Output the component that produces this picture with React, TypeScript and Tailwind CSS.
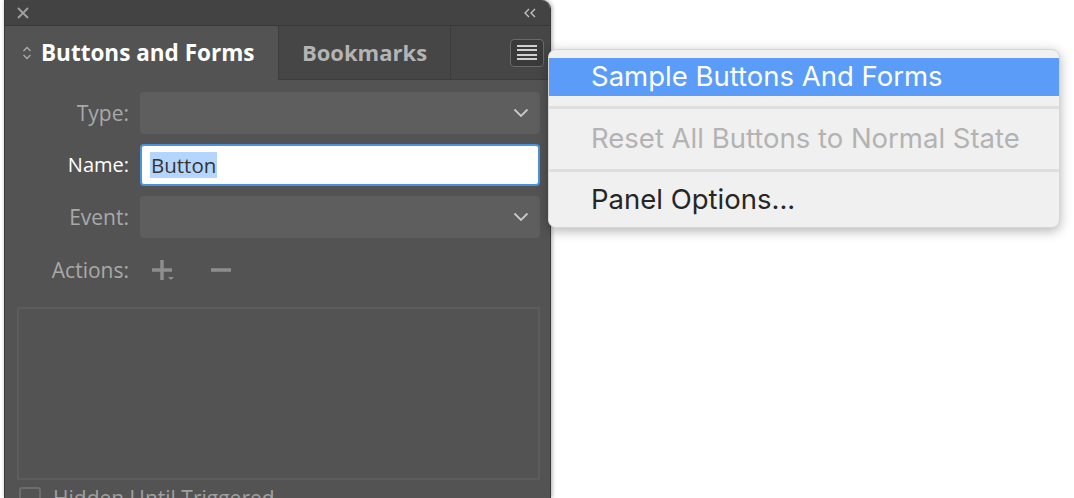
import React from "react";

const panelFont = { fontFamily: '"Open Sans", "Noto Sans", sans-serif' };
const menuFont = { fontFamily: 'Inter, "Liberation Sans", sans-serif' };

function Chevron() {
  return (
    <svg width="16" height="10" viewBox="0 0 16 10" fill="none">
      <path d="M1.5 1.5 L8 8 L14.5 1.5" stroke="#c9c9c9" strokeWidth="1.8" />
    </svg>
  );
}

function Dropdown() {
  return (
    <div className="flex h-[42px] flex-1 items-center justify-end rounded-[4px] bg-[#5e5e5e] pr-[11px]">
      <Chevron />
    </div>
  );
}

function Label({ children, active }: { children: React.ReactNode; active?: boolean }) {
  return (
    <div
      className={`w-[124px] shrink-0 text-right leading-none ${
        active ? "text-[20px] text-white" : "text-[21px] text-[#a9a9a9]"
      }`}
    >
      {children}
    </div>
  );
}

export default function App() {
  return (
    <div className="relative h-[498px] w-[1074px] overflow-hidden bg-white" style={panelFont}>
      {/* panel */}
      <div className="ml-[4px] flex h-full w-[547px] flex-col overflow-hidden rounded-tr-[9px] border-l border-r border-[#3a3a3a] shadow-[1px_0_4px_rgba(0,0,0,0.35)]">
        {/* title bar */}
        <div className="flex h-[25px] shrink-0 items-center justify-between bg-[#434343] pl-[11px] pr-[12px]">
          <svg width="14" height="14" viewBox="0 0 14 14">
            <path d="M2 2 L12 12 M12 2 L2 12" stroke="#a0a0a0" strokeWidth="1.8" />
          </svg>
          <svg width="16" height="12" viewBox="0 0 16 12" fill="none">
            <path d="M7 2 L3 6 L7 10 M13 2 L9 6 L13 10" stroke="#c0c0c0" strokeWidth="1.4" />
          </svg>
        </div>
        <div className="h-[1px] shrink-0 bg-[#383838]" />
        {/* tabs */}
        <div className="flex h-[54px] shrink-0">
          <div className="flex w-[274px] items-center gap-[9px] border-r border-[#3c3c3c] bg-[#535353] pl-[17px]">
            <svg width="10" height="16" viewBox="0 0 10 16" fill="none">
              <path d="M1.5 6 L5 2.5 L8.5 6 M1.5 10 L5 13.5 L8.5 10" stroke="#ababab" strokeWidth="1.3" />
            </svg>
            <span className="text-[22.5px] font-bold text-white">Buttons and Forms</span>
          </div>
          <div className="flex w-[172px] items-center justify-center border-b border-r border-[#3c3c3c] bg-[#464646]">
            <span className="text-[22px] font-bold text-[#b4b4b4]">Bookmarks</span>
          </div>
          <div className="flex flex-1 items-center justify-end border-b border-[#3c3c3c] bg-[#464646] pr-[6px]">
            <div className="flex h-[28px] w-[34px] flex-col items-center justify-center gap-[2.5px] rounded-[4px] border-[1.5px] border-[#6a6a6a] bg-[#3a3a3a]">
              <div className="h-[2px] w-[20px] bg-[#cfcfcf]" />
              <div className="h-[2px] w-[20px] bg-[#cfcfcf]" />
              <div className="h-[2px] w-[20px] bg-[#cfcfcf]" />
              <div className="h-[2px] w-[20px] bg-[#cfcfcf]" />
            </div>
          </div>
        </div>
        {/* body */}
        <div className="flex flex-1 flex-col bg-[#535353] pr-[10px] pt-[12px]">
          <div className="flex items-center gap-[11px]">
            <Label>Type:</Label>
            <Dropdown />
          </div>
          <div className="mt-[10px] flex items-center gap-[11px]">
            <Label active>Name:</Label>
            <div className="flex h-[42px] flex-1 items-center rounded-[4px] border-2 border-[#4b91dc] bg-white pl-[8px]">
              <span className="bg-[#b4d5fd] px-[1px] text-[20.5px] leading-[26px] text-[#363636]">Button</span>
            </div>
          </div>
          <div className="mt-[10px] flex items-center gap-[11px]">
            <Label>Event:</Label>
            <Dropdown />
          </div>
          <div className="mt-[12px] flex h-[40px] items-center gap-[11px]">
            <Label>Actions:</Label>
            <div className="flex items-center">
              <svg width="32" height="24" viewBox="0 0 32 24" className="ml-[11px]">
                <path d="M11 2 V22 M1 12 H21" stroke="#8e8e8e" strokeWidth="3.5" />
                <path d="M17 19 H23 L20 22 Z" fill="#8e8e8e" />
              </svg>
              <svg width="24" height="24" viewBox="0 0 24 24" className="ml-[26px]">
                <path d="M2 12 H22" stroke="#8e8e8e" strokeWidth="3.5" />
              </svg>
            </div>
          </div>
          <div className="ml-[12px] mt-[17px] h-[173px] border-2 border-[#5c5c5c]" />
          <div className="ml-[14px] mt-[7px] flex items-start gap-[12px]">
            <div className="h-[22px] w-[22px] rounded-[3px] border-2 border-[#6c6c6c]" />
            <span className="text-[21px] leading-[22px] text-[#9f9f9f]">Hidden Until Triggered</span>
          </div>
        </div>
      </div>

      {/* popup menu */}
      <div
        className="absolute left-[548px] top-[49px] w-[512px] overflow-hidden rounded-[8px] border border-[#d6d6d6] bg-[#f0f0f0] pt-[8px] shadow-[0_3px_12px_rgba(0,0,0,0.3)]"
        style={menuFont}
      >
        <div className="flex h-[38px] items-center bg-[#5a9cf8] pl-[42px] text-[27.5px] text-white">
          Sample Buttons And Forms
        </div>
        <div className="mt-[10px] h-[3px] bg-[#dedede]" />
        <div className="flex h-[60px] items-center pl-[42px] text-[27.5px] text-[#b3b3b3]">
          Reset All Buttons to Normal State
        </div>
        <div className="h-[3px] bg-[#dedede]" />
        <div className="flex h-[55px] items-center pl-[42px] text-[27.5px] text-[#262626]">
          Panel Options...
        </div>
      </div>
    </div>
  );
}
